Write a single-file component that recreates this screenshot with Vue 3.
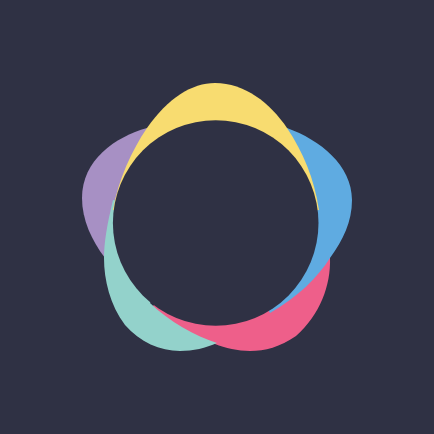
<script setup>
const petals = [
  { name: 'purple', color: '#a790c4', d: 'M147 128 C115 137 82 160 82 198 C82 220 92 241 105 258 L216 223 Z' },
  { name: 'pink', color: '#ee5f8a', d: 'M330 258 C331 285 320 315 296 336 C280 347 265 351 250 351 C238 351 225 348 215 344 L190 340 L150 310 L216 223 Z' },
  { name: 'blue', color: '#5fabe1', d: 'M287 128 C320 140 352 165 352 200 C352 222 343 240 330 258 C318 277 298 297 270 313 L216 223 Z' },
  { name: 'teal', color: '#93d2cb', d: 'M113 200 C107 225 104 242 104 258 C104 280 110 305 125 325 C140 342 160 351 180 351 C193 351 206 348 217 343 C195 336 170 322 150 303 L216 223 Z' },
  { name: 'yellow', color: '#f8dc70', d: 'M113 210 C118 180 132 150 147 128 C168 98 192 83 215 83 C245 83 270 103 287 128 C303 152 314 178 319 210 L216 223 Z' },
]
</script>

<template>
  <div class="page">
    <svg class="logo" viewBox="0 0 434 434" width="434" height="434" role="img" aria-label="Logo">
      <path v-for="p in petals" :key="p.name" :d="p.d" :fill="p.color" />
      <circle cx="215.7" cy="223" r="102.8" fill="#2f3144" />
    </svg>
  </div>
</template>

<style scoped>
.page {
  width: 434px;
  height: 434px;
  background: #2f3144;
  overflow: hidden;
}
.logo {
  display: block;
  filter: blur(0.4px);
}
</style>
